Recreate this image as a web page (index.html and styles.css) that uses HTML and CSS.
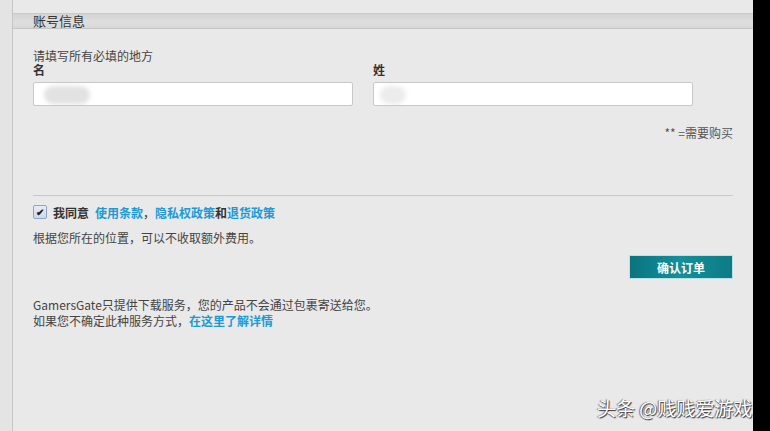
FILE: index.html
```html
<!DOCTYPE html>
<html lang="zh-CN">
<head>
    <meta charset="UTF-8">
    <title>账号信息</title>
    <link rel="stylesheet" href="styles.css">
</head>
<body>
    <div class="page">
        <div class="side"></div>
        <div class="panel">
            <div class="panel-bar">账号信息</div>

            <div class="panel-body">
                <p class="hint">请填写所有必填的地方</p>

                <div class="name-row">
                    <div class="field">
                        <label class="field-label">名</label>
                        <div class="field-input"><span class="blur blur-wide"></span></div>
                    </div>
                    <div class="field">
                        <label class="field-label">姓</label>
                        <div class="field-input"><span class="blur"></span></div>
                    </div>
                </div>

                <p class="required-note">** =需要购买</p>

                <hr class="divider">

                <div class="agree-row">
                    <span class="checkbox">&#10004;</span>
                    <strong>我同意</strong>
                    <a href="#" class="link first">使用条款</a>，<a href="#" class="link">隐私权政策</a><strong>和</strong><a href="#" class="link">退货政策</a>
                </div>
                <p class="fee-note">根据您所在的位置，可以不收取额外费用。</p>

                <div class="actions">
                    <button class="confirm-button">确认订单</button>
                </div>

                <p class="delivery-note">
                    GamersGate只提供下载服务，您的产品不会通过包裹寄送给您。<br>
                    如果您不确定此种服务方式，<a href="#" class="link">在这里了解详情</a>
                </p>
            </div>
        </div>
        <div class="edge"></div>

        <!-- watermark -->
        <div class="watermark">头条 @贱贱爱游戏</div>
    </div>
</body>
</html>
```

FILE: styles.css
```css
body {
    margin: 0;
    overflow: hidden;
    font-family: "Noto Sans CJK SC", "Liberation Sans", sans-serif;
    font-size: 12px;
    color: #333;
    background: #000;
}

.page {
    position: relative;
    display: flex;
    width: 770px;
    height: 431px;
}

.side {
    width: 12px;
    background: #e4e4e4;
    border-right: 1px solid #c6c6c6;
}

.panel {
    width: 740px;
    background: #e9e9e9;
}

.edge {
    flex: 1;
    background: #000;
}

/* section header */
.panel-bar {
    margin-top: 13px;
    height: 14px;
    line-height: 14px;
    padding-left: 20px;
    font-size: 13px;
    color: #333;
    background: linear-gradient(#d4d4d4, #dedede 60%, #d8d8d8);
    border-top: 1px solid #c9c9c9;
    border-bottom: 1px solid #c4c4c4;
}

.panel-body {
    padding: 20px 20px 0 20px;
}

.hint {
    margin: 0;
    height: 14px;
    line-height: 14px;
    color: #444;
}

.name-row {
    display: flex;
    gap: 20px;
}

.field {
    width: 320px;
}

.field-label {
    display: block;
    font-weight: bold;
    height: 14px;
    line-height: 14px;
    margin-bottom: 5px;
    color: #333;
}

.field-input {
    position: relative;
    height: 22px;
    background: #fff;
    border: 1px solid #c8c8c8;
    border-radius: 2px;
    overflow: hidden;
}

.blur {
    position: absolute;
    top: 3px;
    left: 6px;
    width: 26px;
    height: 18px;
    border-radius: 9px;
    background: #ececec;
    filter: blur(2px);
}

.blur-wide {
    left: 10px;
    width: 46px;
    background: #e2e2e2;
}

.required-note {
    margin: 19px 0 0 0;
    text-align: right;
    line-height: 16px;
    color: #555;
}

.required-note::first-letter {
    font-size: 10px;
}

.divider {
    margin: 54px 0 0 0;
    border: none;
    border-top: 1px solid #c8c8c8;
}

.agree-row {
    display: flex;
    align-items: center;
    margin-top: 8px;
    height: 16px;
    color: #333;
}

.agree-row strong {
    font-weight: bold;
}

.checkbox {
    width: 12px;
    height: 12px;
    margin-right: 6px;
    border: 1px solid #8ea4c6;
    border-radius: 2px;
    background: linear-gradient(#e6ecf6, #cfd9ea);
    color: #1e1e1e;
    font-size: 10px;
    font-weight: bold;
    line-height: 12px;
    text-align: center;
}

.link {
    color: #1b9ad6;
    font-weight: bold;
    text-decoration: none;
}

.link.first {
    margin-left: 6px;
}

.fee-note {
    margin: 10px 0 0 0;
    line-height: 16px;
    color: #444;
}

.actions {
    display: flex;
    justify-content: flex-end;
    margin-top: 9px;
}

.confirm-button {
    width: 104px;
    height: 24px;
    padding: 0;
    border: 1px solid #b9e0e3;
    background: linear-gradient(90deg, #0b7480, #13909a 50%, #0d7b86);
    color: #fff;
    font-family: inherit;
    font-size: 12px;
    font-weight: bold;
}

.delivery-note {
    margin: 18px 0 0 0;
    line-height: 16px;
    color: #444;
}

/* watermark */
.watermark {
    position: absolute;
    left: 597px;
    top: 396px;
    font-size: 19px;
    line-height: 24px;
    color: #fff;
    white-space: nowrap;
    text-shadow: 1px 1px 1px #333, -1px 0 1px #666;
}
```
